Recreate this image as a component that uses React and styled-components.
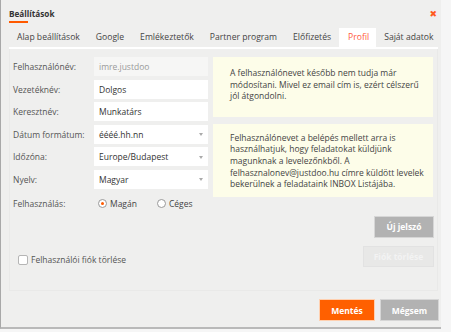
import React, { useState } from 'react';
import styled, { createGlobalStyle } from 'styled-components';

const GlobalStyle = createGlobalStyle`
  html, body {
    margin: 0;
    padding: 0;
  }
  body {
    width: 451px;
    height: 332px;
    overflow: hidden;
    background: #f6f6f6;
    font-family: "Open Sans", "Liberation Sans", sans-serif;
    font-size: 8.5px;
    color: #444;
  }
`;

const Screen = styled.div`
  width: 451px;
  height: 332px;
  background: #f6f6f6;
`;

const Dialog = styled.div`
  width: 441px;
  height: 329px;
  box-sizing: border-box;
  background: #efefee;
  border-left: 1px solid #a8a8a8;
  border-bottom: 2px solid #b9b9b9;
  padding: 0 3px 0 8px;
  display: flex;
  flex-direction: column;
`;

const Header = styled.div`
  height: 28px;
  display: flex;
  align-items: center;
  justify-content: space-between;
`;

const Title = styled.div`
  position: relative;
  font-weight: 700;
  font-size: 8.2px;
  color: #333;
  margin-top: -1px;

  &:after {
    content: '';
    position: absolute;
    left: 0;
    top: 13px;
    width: 19px;
    height: 1.5px;
    background: #ff5a00;
  }
`;

const Close = styled.span`
  color: #ff5a1f;
  font-size: 9px;
  font-weight: 700;
  margin-right: 1px;
  margin-top: -1px;
  font-family: "DejaVu Sans", sans-serif;
`;

const Tabs = styled.div`
  display: flex;
  height: 19px;
  border-bottom: 2px solid #fff;
`;

const Tab = styled.div`
  padding: 0 ${p => (p.active ? '7px 0 9px' : '8px')};
  line-height: 19px;
  font-size: 8.6px;
  white-space: nowrap;
  color: ${p => (p.active ? '#ff5a3c' : '#444')};
  background: ${p => (p.active ? '#fff' : 'transparent')};
`;

const Panel = styled.div`
  height: 242px;
  box-sizing: border-box;
  border: 1px solid #e9e9e8;
  border-top: none;
  padding: 8px 4px 0 3px;
  display: flex;
  gap: 5px;
`;

const FormColumn = styled.div`
  width: 195px;
  display: flex;
  flex-direction: column;
`;

const Row = styled.div`
  display: flex;
  align-items: center;
  height: ${p => p.h || 19}px;
  margin-bottom: 3.6px;
`;

const Label = styled.div`
  width: 81px;
  color: #555;
  white-space: nowrap;
`;

const Field = styled.div`
  position: relative;
  width: 114px;
  height: 19px;
  box-sizing: border-box;
  padding-left: 5px;
  display: flex;
  align-items: center;
  background: ${p => (p.disabled ? '#f6f6f5' : '#fff')};
  color: ${p => (p.disabled ? '#9a9a9a' : '#333')};
`;

const Arrow = styled.span`
  position: absolute;
  right: 5px;
  top: 50%;
  margin-top: -1px;
  border-left: 2.5px solid transparent;
  border-right: 2.5px solid transparent;
  border-top: 3px solid #aaa;
`;

const RadioGroup = styled.div`
  display: flex;
  align-items: center;
  gap: 20px;
  padding-left: 4px;
`;

const RadioLabel = styled.label`
  display: flex;
  align-items: center;
  gap: 3px;
  color: #444;
`;

const RadioDot = styled.span`
  width: 9px;
  height: 9px;
  box-sizing: border-box;
  border-radius: 50%;
  border: 1px solid #999;
  background: #fff;
  display: flex;
  align-items: center;
  justify-content: center;

  &:after {
    content: '';
    width: 3px;
    height: 3px;
    border-radius: 50%;
    background: ${p => (p.checked ? '#ff5a00' : 'transparent')};
  }
`;

const CheckRow = styled.label`
  display: flex;
  align-items: center;
  gap: 3px;
  margin-top: 37px;
  padding-left: 5px;
  color: #555;
`;

const CheckBox = styled.span`
  width: 10px;
  height: 10px;
  box-sizing: border-box;
  border: 1px solid #b5b5b5;
  border-radius: 2px;
  background: #fff;
`;

const InfoColumn = styled.div`
  width: 220px;
  display: flex;
  flex-direction: column;
  align-items: flex-end;
`;

const InfoBox = styled.div`
  width: 100%;
  box-sizing: border-box;
  background: #fdfde9;
  line-height: 11.6px;
  color: #444;
  white-space: nowrap;
  padding: ${p => p.pad};
  margin-bottom: ${p => p.mb || 0}px;
`;

const Button = styled.button`
  font-family: "Open Sans", "Liberation Sans", sans-serif;
  font-size: 8.5px;
  font-weight: 700;
  color: ${p => p.fg || '#fff'};
  border: none;
  padding: 0;
  width: ${p => p.w}px;
  height: ${p => p.h || 20}px;
  background: ${p => p.bg};
  margin-bottom: ${p => p.mb || 0}px;
  box-shadow: 0 0 0 1px ${p => p.ring || 'transparent'};
`;

const Footer = styled.div`
  display: flex;
  justify-content: flex-end;
  gap: 7px;
  padding-top: 9px;
`;

export default function App() {
  const [usage, setUsage] = useState('magan');

  const tabs = ['Alap beállítások', 'Google', 'Emlékeztetők', 'Partner program', 'Előfizetés', 'Profil', 'Saját adatok'];

  return (
    <Screen>
      <GlobalStyle />
      <Dialog>
        <Header>
          <Title>Beállítások</Title>
          <Close>✖</Close>
        </Header>
        <Tabs>
          {tabs.map(t => (
            <Tab key={t} active={t === 'Profil'}>{t}</Tab>
          ))}
        </Tabs>
        <Panel>
          <FormColumn>
            <Row>
              <Label>Felhasználónév:</Label>
              <Field disabled>imre.justdoo</Field>
            </Row>
            <Row>
              <Label>Vezetéknév:</Label>
              <Field>Dolgos</Field>
            </Row>
            <Row>
              <Label>Keresztnév:</Label>
              <Field>Munkatárs</Field>
            </Row>
            <Row>
              <Label>Dátum formátum:</Label>
              <Field>éééé.hh.nn<Arrow /></Field>
            </Row>
            <Row>
              <Label>Időzóna:</Label>
              <Field>Europe/Budapest<Arrow /></Field>
            </Row>
            <Row>
              <Label>Nyelv:</Label>
              <Field>Magyar<Arrow /></Field>
            </Row>
            <Row h={21}>
              <Label>Felhasználás:</Label>
              <RadioGroup>
                <RadioLabel onClick={() => setUsage('magan')}>
                  <RadioDot checked={usage === 'magan'} />Magán
                </RadioLabel>
                <RadioLabel onClick={() => setUsage('ceges')}>
                  <RadioDot checked={usage === 'ceges'} />Céges
                </RadioLabel>
              </RadioGroup>
            </Row>
            <CheckRow>
              <CheckBox />Felhasználói fiók törlése
            </CheckRow>
          </FormColumn>
          <InfoColumn>
            <InfoBox pad="10px 10px 15px 17px" mb={7}>
              A felhasználónevet később nem tudja már<br />
              módosítani. Mivel ez email cím is, ezért célszerű<br />
              jól átgondolni.
            </InfoBox>
            <InfoBox pad="8px 10px 7px 17px" mb={20}>
              Felhasználónevet a belépés mellett arra is<br />
              használhatjuk, hogy feladatokat küldjünk<br />
              magunknak a levelezőnkből. A<br />
              felhasznalonev@justdoo.hu címre küldött levelek<br />
              bekerülnek a feladataink INBOX Listájába.
            </InfoBox>
            <Button w={58} bg="#b2b2b2" ring="#d6d6d6" mb={10}>Új jelszó</Button>
            <Button w={69} h={19} bg="#e8e8e7" fg="#f3f3f3" ring="#e2e2e2">Fiók törlése</Button>
          </InfoColumn>
        </Panel>
        <Footer>
          <Button w={54} bg="#ff6000" ring="#ffd0b0">Mentés</Button>
          <Button w={57} bg="#b2b2b2" ring="#d6d6d6">Mégsem</Button>
        </Footer>
      </Dialog>
    </Screen>
  );
}
